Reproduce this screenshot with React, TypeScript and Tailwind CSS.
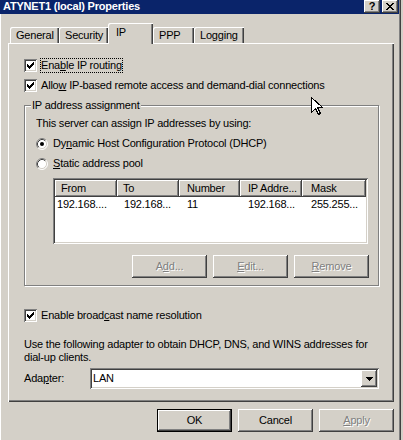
import type { ReactNode } from 'react'

// classic win32 3d edges
const raised = 'shadow-[inset_-1px_-1px_#404040,inset_1px_1px_#ffffff,inset_-2px_-2px_#808080,inset_2px_2px_#d4d0c8]'
const sunken = 'shadow-[inset_1px_1px_#808080,inset_-1px_-1px_#ffffff,inset_2px_2px_#404040,inset_-2px_-2px_#d4d0c8]'
const disabledText = 'text-[#808080] [text-shadow:1px_1px_#ffffff]'

function K({ children }: { children: ReactNode }) {
  return <span className="underline underline-offset-[1px] decoration-1">{children}</span>
}

function CheckBox() {
  return (
    <div className={`w-[13px] h-[13px] shrink-0 bg-white ${sunken}`}>
      <svg width="13" height="13" viewBox="0 0 13 13" shapeRendering="crispEdges">
        <rect x="3" y="5" width="1" height="3" fill="#000" />
        <rect x="4" y="6" width="1" height="3" fill="#000" />
        <rect x="5" y="7" width="1" height="3" fill="#000" />
        <rect x="6" y="6" width="1" height="3" fill="#000" />
        <rect x="7" y="5" width="1" height="3" fill="#000" />
        <rect x="8" y="4" width="1" height="3" fill="#000" />
        <rect x="9" y="3" width="1" height="3" fill="#000" />
      </svg>
    </div>
  )
}

function Radio({ checked }: { checked?: boolean }) {
  return (
    <svg width="12" height="12" viewBox="0 0 12 12" className="shrink-0">
      <circle cx="6" cy="6" r="5" fill="#fff" />
      <path d="M2.11 9.89 A5.5 5.5 0 0 1 9.89 2.11" stroke="#808080" strokeWidth="1" fill="none" />
      <path d="M9.89 2.11 A5.5 5.5 0 0 1 2.11 9.89" stroke="#ffffff" strokeWidth="1" fill="none" />
      <path d="M2.82 9.18 A4.5 4.5 0 0 1 9.18 2.82" stroke="#404040" strokeWidth="1" fill="none" />
      <path d="M9.18 2.82 A4.5 4.5 0 0 1 2.82 9.18" stroke="#d4d0c8" strokeWidth="1" fill="none" />
      {checked && <circle cx="6" cy="6" r="2" fill="#000" />}
    </svg>
  )
}

function Button({ children, disabled, isDefault }: { children: ReactNode; disabled?: boolean; isDefault?: boolean }) {
  return (
    <div
      className={`w-[75px] h-[23px] flex items-center justify-center bg-[#d4d0c8] ${
        isDefault ? 'border border-black' : ''
      }`}
    >
      <div className={`w-full h-full flex items-center justify-center ${raised} ${disabled ? disabledText : ''}`}>
        {children}
      </div>
    </div>
  )
}

const columns = [
  { label: 'From', w: 'w-[62px]', hp: 'pl-[6px]', rp: 'pl-[2px]', value: '192.168....' },
  { label: 'To', w: 'w-[62px]', hp: 'pl-[6px]', rp: 'pl-[7px]', value: '192.168...' },
  { label: 'Number', w: 'w-[61px]', hp: 'pl-[8px]', rp: 'pl-[8px]', value: '11' },
  { label: 'IP Addre...', w: 'w-[62px]', hp: 'pl-[8px]', rp: 'pl-[8px]', value: '192.168...' },
  { label: 'Mask', w: 'w-[64px]', hp: 'pl-[9px]', rp: 'pl-[9px]', value: '255.255...' },
]

export default function App() {
  const tabs = [
    { label: 'General', w: 'w-[49px]' },
    { label: 'Security', w: 'w-[49px]' },
    { label: 'IP', w: 'w-[45px]', active: true },
    { label: 'PPP', w: 'w-[41px]' },
    { label: 'Logging', w: 'w-[50px]' },
  ]

  return (
    <div className="relative w-[403px] h-[440px] overflow-hidden bg-[#d4d0c8] text-[11px] leading-[13px] tracking-[-0.2px] text-black font-['Liberation_Sans',Arial,sans-serif]">
      <div className="w-[401px] h-[440px] flex flex-col shadow-[inset_1px_0_#ffffff,inset_-1px_0_#404040,inset_-2px_0_#808080]">
        {/* title bar */}
        <div className="h-[14px] mr-[2px] bg-[#0a246a] flex items-start pl-[3px] pr-[1px]">
          <span className="text-white font-bold leading-[13px]">ATYNET1 (local) Properties</span>
          <div className="ml-auto flex gap-[2px]">
            <div className={`w-[16px] h-[13px] bg-[#d4d0c8] flex items-center justify-center font-bold text-[11px] ${raised}`}>?</div>
            <div className={`w-[16px] h-[13px] bg-[#d4d0c8] flex items-center justify-center ${raised}`}>
              <svg width="8" height="7" viewBox="0 0 8 7" shapeRendering="crispEdges">
                <path d="M0 0h2v1h-2zM6 0h2v1h-2zM1 1h2v1h-2zM5 1h2v1h-2zM2 2h4v1h-4zM3 3h2v1h-2zM2 4h4v1h-4zM1 5h2v1h-2zM5 5h2v1h-2zM0 6h2v1h-2zM6 6h2v1h-2z" fill="#000" />
              </svg>
            </div>
          </div>
        </div>

        {/* tabs */}
        <div className="h-[20px] mt-[9px] ml-[10px] flex items-end">
          {tabs.map((t) =>
            t.active ? (
              <div
                key={t.label}
                className={`${t.w} h-[21px] -mb-[1px] relative z-10 bg-[#d4d0c8] pl-[8px] pt-[3px] rounded-tl-[2px] shadow-[inset_1px_1px_#ffffff,inset_-1px_0_#404040,inset_-2px_0_#808080]`}
              >
                {t.label}
              </div>
            ) : (
              <div
                key={t.label}
                className={`${t.w} h-[16px] bg-[#d4d0c8] pl-[6px] flex items-center rounded-tl-[2px] shadow-[inset_1px_1px_#ffffff,inset_-1px_0_#404040,inset_-2px_0_#808080]`}
              >
                {t.label}
              </div>
            )
          )}
        </div>

        {/* tab page */}
        <div className="ml-[8px] w-[386px] h-[359px] flex flex-col pl-[16px] shadow-[inset_1px_1px_#ffffff,inset_-1px_-1px_#404040,inset_-2px_-2px_#808080]">
          <div className="mt-[16px] h-[13px] flex items-center">
            <CheckBox />
            <span className="ml-[4px] h-[13px] outline outline-1 outline-dotted outline-black">
              Ena<K>b</K>le IP routing
            </span>
          </div>
          <div className="mt-[7px] h-[13px] flex items-center">
            <CheckBox />
            <span className="ml-[4px]">
              Allo<K>w</K> IP-based remote access and demand-dial connections
            </span>
          </div>

          {/* group box */}
          <div className="mt-[13px] w-[355px] h-[181px] border border-[#808080] shadow-[inset_1px_1px_#ffffff,1px_1px_#ffffff] flex flex-col">
            <div className="-mt-[7px] ml-[6px] self-start px-[1px] h-[13px] bg-[#d4d0c8]">IP address assignment</div>
            <div className="flex flex-col pl-[11px] pr-[9px]">
              <div className="mt-[5px] h-[13px]">This server can assign IP addresses by using:</div>
              <div className="mt-[7px] h-[13px] flex items-center">
                <Radio checked />
                <span className="ml-[5px]">
                  Dy<K>n</K>amic Host Configuration Protocol (DHCP)
                </span>
              </div>
              <div className="mt-[7px] h-[13px] flex items-center">
                <Radio />
                <span className="ml-[5px]">
                  <K>S</K>tatic address pool
                </span>
              </div>

              {/* list view */}
              <div className={`mt-[8px] ml-[17px] w-[315px] h-[66px] bg-white p-[2px] ${sunken}`}>
                <div className="flex h-[17px]">
                  {columns.map((c) => (
                    <div
                      key={c.label}
                      className={`${c.w} ${c.hp} h-[17px] flex items-center bg-[#d4d0c8] whitespace-nowrap overflow-hidden ${raised}`}
                    >
                      {c.label}
                    </div>
                  ))}
                </div>
                <div className="flex h-[15px] items-center">
                  {columns.map((c) => (
                    <div key={c.label} className={`${c.w} ${c.rp} whitespace-nowrap overflow-hidden`}>
                      {c.value}
                    </div>
                  ))}
                </div>
              </div>

              <div className="mt-[11px] flex justify-end gap-[6px]">
                <Button disabled>
                  A<K>d</K>d...
                </Button>
                <Button disabled>
                  <K>E</K>dit...
                </Button>
                <Button disabled>
                  <K>R</K>emove
                </Button>
              </div>
            </div>
          </div>

          <div className="mt-[23px] h-[13px] flex items-center">
            <CheckBox />
            <span className="ml-[4px]">
              Enable broad<K>c</K>ast name resolution
            </span>
          </div>

          <div className="mt-[16px]">
            Use the following adapter to obtain DHCP, DNS, and WINS addresses for
            <br />
            dial-up clients.
          </div>

          <div className="mt-[4px] flex items-center">
            <div className="w-[66px]">
              Ada<K>p</K>ter:
            </div>
            <div className={`w-[289px] h-[21px] bg-white flex items-center pl-[3px] pr-[2px] ${sunken}`}>
              <span>LAN</span>
              <div className={`ml-auto w-[16px] h-[17px] bg-[#d4d0c8] flex items-center justify-center ${raised}`}>
                <svg width="7" height="4" viewBox="0 0 7 4" shapeRendering="crispEdges">
                  <path d="M0 0h7v1h-7zM1 1h5v1h-5zM2 2h3v1h-3zM3 3h1v1h-1z" fill="#000" />
                </svg>
              </div>
            </div>
          </div>
        </div>

        {/* dialog buttons */}
        <div className="mt-[7px] flex justify-end gap-[6px] pr-[7px]">
          <Button isDefault>OK</Button>
          <Button>Cancel</Button>
          <Button disabled>
            <K>A</K>pply
          </Button>
        </div>
      </div>

      {/* mouse pointer */}
      <svg className="absolute left-[311px] top-[97px]" width="12" height="19" viewBox="0 0 12 19" shapeRendering="crispEdges">
        <path d="M0.5 0.5 L0.5 15.5 L4.5 11.5 L7.5 17.5 L9.5 16.5 L6.5 10.5 L11.5 10.5 Z" fill="#fff" stroke="#000" strokeWidth="1" />
      </svg>
    </div>
  )
}
